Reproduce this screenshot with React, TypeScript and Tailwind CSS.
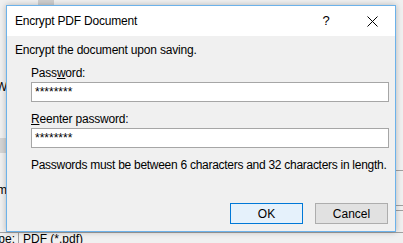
export default function App() {
  const font = { fontFamily: '"Liberation Sans", Arial, sans-serif' };
  return (
    <div className="relative w-[403px] h-[243px] overflow-hidden bg-[#f0f0f0] text-[12px] text-black" style={font}>
      {/* Underlying window, partially visible behind the dialog */}
      <div className="absolute left-[38px] top-0 w-[16px] h-[5px] bg-[#cfcfcf]" />
      <div className="absolute left-[-4px] top-[79px] leading-[16px]">W</div>
      <div className="absolute left-0 top-[138px] w-[6px] h-[15px] bg-[#d4d4d4]" />
      <div className="absolute left-[-3px] top-[182px] leading-[16px]">m</div>
      <div className="absolute left-0 top-[232px] w-[403px] h-[11px] flex border-t border-[#a0a0a0]">
        <div className="w-[22px] -ml-[4px] leading-[12px] text-right pr-[3px]">pe:</div>
        <div className="flex-1 border-l border-[#a0a0a0] pl-[4px] leading-[12px]">PDF (*.pdf)</div>
      </div>
      <div className="absolute left-[396px] top-[170px] w-[7px] h-px bg-[#a0a0a0]" />
      <div className="absolute left-[396px] top-[205px] w-[7px] h-[6px] border-y border-[#a0a0a0]" />

      {/* Dialog window */}
      <div className="absolute left-[6px] top-[5px] w-[390px] h-[227px] flex flex-col border border-[#6cb2ea] bg-[#f0f0f0] shadow-[0_0_6px_rgba(0,0,0,0.25)] tracking-[-0.2px]">
        <div className="h-[30px] shrink-0 bg-white flex items-center">
          <div className="pl-[8px] flex-1 leading-[16px]">Encrypt PDF Document</div>
          <div className="w-[46px] text-center leading-[16px] text-[13px]">?</div>
          <div className="w-[46px] h-[30px] flex items-center justify-center">
            <svg width="11" height="11" viewBox="0 0 11 11">
              <path d="M0.5 0.5 L10.5 10.5 M10.5 0.5 L0.5 10.5" stroke="#000" strokeWidth="1" />
            </svg>
          </div>
        </div>

        <div className="flex flex-col pl-[8px] pr-[6px]">
          <div className="mt-[6px] leading-[16px]">Encrypt the document upon saving.</div>

          <div className="pl-[16px] flex flex-col">
            <div className="mt-[7px] leading-[16px]">
              Pass<span className="underline">w</span>ord:
            </div>
            <div className="mt-[1px] h-[20px] w-[358px] bg-white border border-[#a6a6a6] flex items-center pl-[3px] leading-[12px] tracking-normal">
              ********
            </div>

            <div className="mt-[9px] leading-[16px]">
              <span className="underline">R</span>eenter password:
            </div>
            <div className="mt-[1px] h-[20px] w-[358px] bg-white border border-[#a6a6a6] flex items-center pl-[3px] leading-[12px] tracking-normal">
              ********
            </div>

            <div className="mt-[9px] leading-[16px] whitespace-nowrap tracking-[-0.28px]">
              Passwords must be between 6 characters and 32 characters in length.
            </div>
          </div>

          <div className="mt-[30px] flex justify-end gap-[12px] pr-[1px] tracking-normal">
            <button className="w-[73px] h-[21px] bg-[#e5f1fb] border border-[#0078d7] leading-[16px]">
              OK
            </button>
            <button className="w-[73px] h-[21px] bg-[#e1e1e1] border border-[#adadad] leading-[16px]">
              Cancel
            </button>
          </div>
        </div>
      </div>
    </div>
  );
}
